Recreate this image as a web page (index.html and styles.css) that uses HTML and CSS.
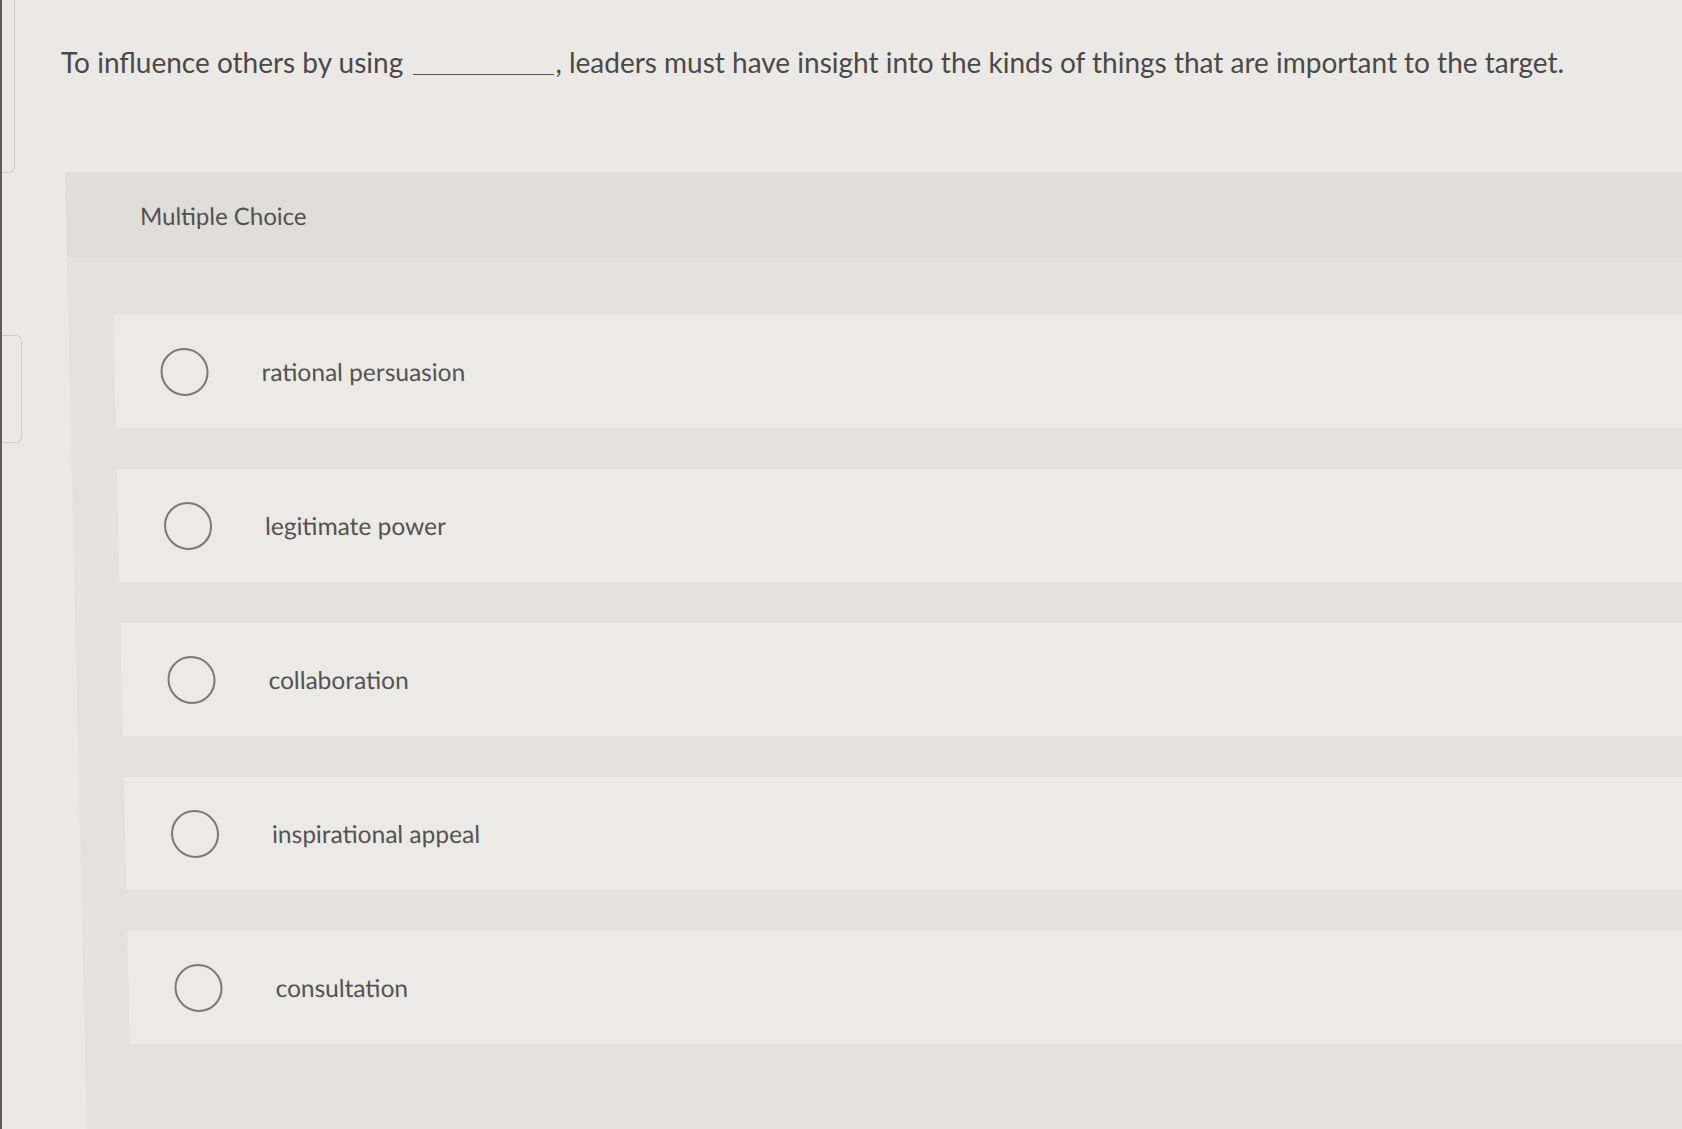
FILE: index.html
```html
<!DOCTYPE html>
<html lang="en">
<head>
<meta charset="utf-8">
<title>Multiple Choice</title>
<link rel="stylesheet" href="styles.css">
</head>
<body>
<div class="screen">
  <aside class="rail">
    <div class="tab tab-top"></div>
    <div class="tab tab-mid"></div>
  </aside>
  <main class="content">
    <p class="question">To influence others by using <span class="blank"></span>, leaders must have insight into the kinds of things that are important to the target.</p>
    <section class="panel">
      <div class="panel-head">Multiple Choice</div>
      <div class="choices">
        <div class="choice"><span class="radio"></span><span class="label">rational persuasion</span></div>
        <div class="choice"><span class="radio"></span><span class="label">legitimate power</span></div>
        <div class="choice"><span class="radio"></span><span class="label">collaboration</span></div>
        <div class="choice"><span class="radio"></span><span class="label">inspirational appeal</span></div>
        <div class="choice"><span class="radio"></span><span class="label">consultation</span></div>
      </div>
    </section>
  </main>
</div>
</body>
</html>
```
FILE: styles.css
```css
html, body {
  margin: 0;
  padding: 0;
}
body {
  background: #ebe9e5;
  font-family: Lato, "Liberation Sans", sans-serif;
  overflow: hidden;
  height: 1129px;
}
.screen {
  display: flex;
  height: 1129px;
  border-left: 2px solid #5e5d5b;
}
.rail {
  width: 24px;
  flex: none;
  display: flex;
  flex-direction: column;
}
.tab {
  box-sizing: border-box;
  border: 1px solid #cfcdc9;
  border-left: none;
}
.tab-top {
  width: 13px;
  height: 173px;
  border-top: none;
  border-bottom-right-radius: 6px;
}
.tab-mid {
  width: 20px;
  height: 108px;
  margin-top: 162px;
  border-top-right-radius: 6px;
  border-bottom-right-radius: 6px;
}
.content {
  flex: 1;
  min-width: 0;
}
.question {
  margin: 0;
  padding: 46px 0 0 35px;
  font-size: 28px;
  line-height: 1.2;
  color: #4b4948;
  white-space: nowrap;
}
.blank {
  display: inline-block;
  width: 141px;
  height: 1px;
  border-bottom: 1.5px solid #5a5857;
  vertical-align: -2px;
  margin-left: 3px;
  margin-right: 1px;
}
.panel {
  margin: 92px -80px 0 39px;
  height: 1000px;
  background: #e3e2de;
  transform: skewX(1.3deg);
  transform-origin: top left;
}
.panel-head {
  height: 86px;
  display: flex;
  align-items: center;
  padding-left: 74px;
  background: #dfded9;
  font-size: 24px;
  color: #535150;
}
.choices {
  padding: 57px 0 0 45px;
  display: flex;
  flex-direction: column;
  gap: 41px;
}
.choice {
  height: 113px;
  display: flex;
  align-items: center;
  padding-left: 46px;
  background: #ebeae6;
}
.radio {
  width: 48px;
  height: 48px;
  box-sizing: border-box;
  border: 2px solid #7b7978;
  border-radius: 50%;
  flex: none;
}
.label {
  margin-left: 53px;
  font-size: 24.5px;
  color: #555352;
}
```
